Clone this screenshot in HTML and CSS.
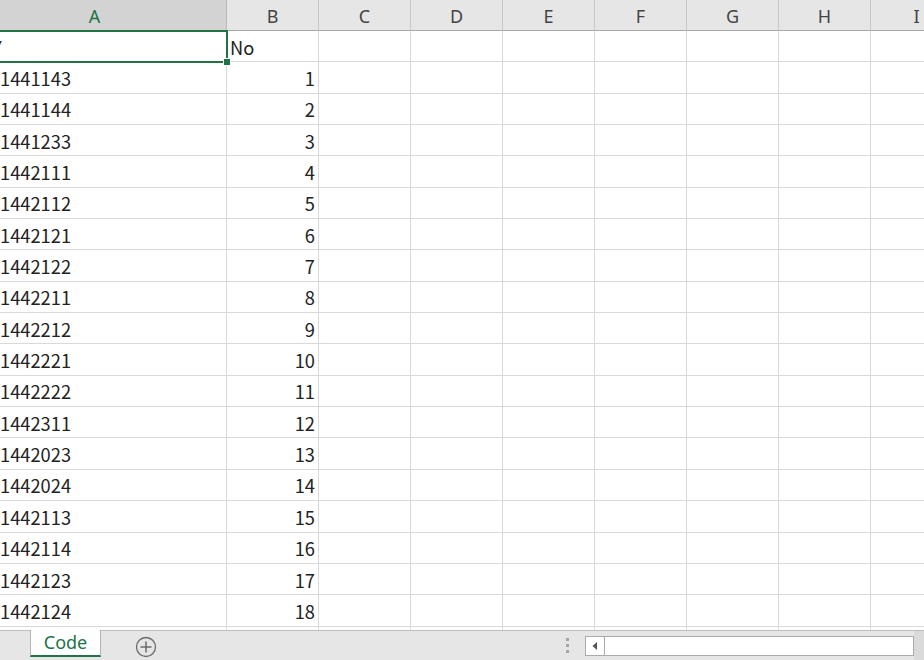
FILE: index.html
```html
<!DOCTYPE html>
<html lang="ja">
<head>
<meta charset="utf-8">
<title>Code</title>
<link rel="stylesheet" href="styles.css">
</head>
<body>
<div class="app">
  <div class="sheet">
    <div class="grid">
      <div class="ch ch-sel">A</div><div class="ch">B</div><div class="ch">C</div><div class="ch">D</div><div class="ch">E</div><div class="ch">F</div><div class="ch">G</div><div class="ch">H</div><div class="ch ch-last">I</div>

      <div class="c a cut">Y</div><div class="c">No</div><div class="c"></div><div class="c"></div><div class="c"></div><div class="c"></div><div class="c"></div><div class="c"></div><div class="c"></div>
      <div class="c a">1441143</div><div class="c n">1</div><div class="c"></div><div class="c"></div><div class="c"></div><div class="c"></div><div class="c"></div><div class="c"></div><div class="c"></div>
      <div class="c a">1441144</div><div class="c n">2</div><div class="c"></div><div class="c"></div><div class="c"></div><div class="c"></div><div class="c"></div><div class="c"></div><div class="c"></div>
      <div class="c a">1441233</div><div class="c n">3</div><div class="c"></div><div class="c"></div><div class="c"></div><div class="c"></div><div class="c"></div><div class="c"></div><div class="c"></div>
      <div class="c a">1442111</div><div class="c n">4</div><div class="c"></div><div class="c"></div><div class="c"></div><div class="c"></div><div class="c"></div><div class="c"></div><div class="c"></div>
      <div class="c a">1442112</div><div class="c n">5</div><div class="c"></div><div class="c"></div><div class="c"></div><div class="c"></div><div class="c"></div><div class="c"></div><div class="c"></div>
      <div class="c a">1442121</div><div class="c n">6</div><div class="c"></div><div class="c"></div><div class="c"></div><div class="c"></div><div class="c"></div><div class="c"></div><div class="c"></div>
      <div class="c a">1442122</div><div class="c n">7</div><div class="c"></div><div class="c"></div><div class="c"></div><div class="c"></div><div class="c"></div><div class="c"></div><div class="c"></div>
      <div class="c a">1442211</div><div class="c n">8</div><div class="c"></div><div class="c"></div><div class="c"></div><div class="c"></div><div class="c"></div><div class="c"></div><div class="c"></div>
      <div class="c a">1442212</div><div class="c n">9</div><div class="c"></div><div class="c"></div><div class="c"></div><div class="c"></div><div class="c"></div><div class="c"></div><div class="c"></div>
      <div class="c a">1442221</div><div class="c n">10</div><div class="c"></div><div class="c"></div><div class="c"></div><div class="c"></div><div class="c"></div><div class="c"></div><div class="c"></div>
      <div class="c a">1442222</div><div class="c n">11</div><div class="c"></div><div class="c"></div><div class="c"></div><div class="c"></div><div class="c"></div><div class="c"></div><div class="c"></div>
      <div class="c a">1442311</div><div class="c n">12</div><div class="c"></div><div class="c"></div><div class="c"></div><div class="c"></div><div class="c"></div><div class="c"></div><div class="c"></div>
      <div class="c a">1442023</div><div class="c n">13</div><div class="c"></div><div class="c"></div><div class="c"></div><div class="c"></div><div class="c"></div><div class="c"></div><div class="c"></div>
      <div class="c a">1442024</div><div class="c n">14</div><div class="c"></div><div class="c"></div><div class="c"></div><div class="c"></div><div class="c"></div><div class="c"></div><div class="c"></div>
      <div class="c a">1442113</div><div class="c n">15</div><div class="c"></div><div class="c"></div><div class="c"></div><div class="c"></div><div class="c"></div><div class="c"></div><div class="c"></div>
      <div class="c a">1442114</div><div class="c n">16</div><div class="c"></div><div class="c"></div><div class="c"></div><div class="c"></div><div class="c"></div><div class="c"></div><div class="c"></div>
      <div class="c a">1442123</div><div class="c n">17</div><div class="c"></div><div class="c"></div><div class="c"></div><div class="c"></div><div class="c"></div><div class="c"></div><div class="c"></div>
      <div class="c a">1442124</div><div class="c n">18</div><div class="c"></div><div class="c"></div><div class="c"></div><div class="c"></div><div class="c"></div><div class="c"></div><div class="c"></div>
      <div class="c a"></div><div class="c"></div><div class="c"></div><div class="c"></div><div class="c"></div><div class="c"></div><div class="c"></div><div class="c"></div><div class="c"></div>
    </div>
    <div class="selection"><span class="handle"></span></div>
  </div>
  <div class="tabbar">
    <div class="tab">Code</div>
    <div class="addsheet">
      <svg width="22" height="22" viewBox="0 0 22 22"><circle cx="11" cy="11" r="9.5" fill="none" stroke="#6b6b6b" stroke-width="1.3"/><path d="M11 5.5v11M5.5 11h11" stroke="#6b6b6b" stroke-width="1.5"/></svg>
    </div>
    <div class="spacer"></div>
    <div class="grip"><i></i><i></i><i></i></div>
    <div class="hscroll">
      <div class="arrow"><svg width="8" height="10" viewBox="0 0 8 10"><path d="M6 1v8L1.5 5z" fill="#555"/></svg></div>
      <div class="thumb"></div>
    </div>
    <div class="rest"></div>
  </div>
</div>
</body>
</html>
```
FILE: styles.css
```css
html, body {
  margin: 0;
  padding: 0;
  background: #fff;
}
.app {
  width: 924px;
  height: 660px;
  overflow: hidden;
  display: flex;
  flex-direction: column;
}
.sheet {
  position: relative;
  height: 630px;
  overflow: hidden;
  flex: none;
}
.grid {
  display: grid;
  grid-template-columns: 227px repeat(8, 92px);
  grid-template-rows: 31px repeat(20, 31.35px);
  width: 963px;
}
.ch {
  box-sizing: border-box;
  background: #e6e6e6;
  border-right: 1px solid #c8c8c8;
  border-bottom: 1px solid #a9a9a9;
  display: flex;
  align-items: center;
  justify-content: center;
  font-family: "Noto Sans", "DejaVu Sans", sans-serif;
  font-size: 18px;
  color: #444;
  padding-top: 1px;
}
.ch-sel {
  background: #d3d3d3;
  color: #217346;
  border-right-color: #b8b8b8;
  padding-right: 37px;
}
.c {
  box-sizing: border-box;
  border-right: 1px solid #d9d9d9;
  border-bottom: 1px solid #d9d9d9;
  display: flex;
  align-items: center;
  padding: 1px 3px 0 3px;
  font-family: "Noto Sans CJK JP", "Noto Sans", sans-serif;
  font-size: 18.3px;
  color: #222;
  overflow: hidden;
  white-space: nowrap;
}
.c.a {
  padding-left: 0;
}
.c.cut {
  text-indent: -8px;
}
.c.n {
  justify-content: flex-end;
}
.selection {
  position: absolute;
  left: -4px;
  top: 30px;
  width: 232px;
  height: 33px;
  box-sizing: border-box;
  border: 2px solid #217346;
}
.handle {
  position: absolute;
  right: -5px;
  bottom: -5px;
  width: 6px;
  height: 6px;
  background: #217346;
  border: 1px solid #fff;
}
.tabbar {
  flex: none;
  height: 30px;
  box-sizing: border-box;
  background: #e6e6e6;
  border-top: 1px solid #bdbdbd;
  display: flex;
  align-items: stretch;
}
.tab {
  margin-left: 30px;
  width: 71px;
  box-sizing: border-box;
  background: #fff;
  border-left: 1px solid #b5b5b5;
  border-right: 1px solid #b5b5b5;
  border-bottom: 2px solid #217346;
  margin-bottom: 3px;
  margin-top: -1px;
  display: flex;
  align-items: center;
  justify-content: center;
  font-family: "Noto Sans", sans-serif;
  font-size: 18px;
  color: #217346;
  padding-bottom: 1px;
}
.addsheet {
  margin-left: 34px;
  display: flex;
  align-items: center;
  padding-top: 2px;
}
.spacer {
  flex: 1;
}
.grip {
  width: 6px;
  display: flex;
  flex-direction: column;
  justify-content: center;
  gap: 3px;
  align-items: center;
  margin-right: 15px;
}
.grip i {
  display: block;
  width: 3px;
  height: 3px;
  background: #a6a6a6;
}
.hscroll {
  width: 329px;
  display: flex;
  align-items: center;
}
.arrow {
  width: 20px;
  height: 20px;
  box-sizing: border-box;
  background: #fff;
  border: 1px solid #ababab;
  display: flex;
  align-items: center;
  justify-content: center;
}
.thumb {
  flex: 1;
  height: 20px;
  box-sizing: border-box;
  background: #fff;
  border: 1px solid #ababab;
  border-left: none;
}
.rest {
  width: 10px;
  background: #dadada;
}
```
